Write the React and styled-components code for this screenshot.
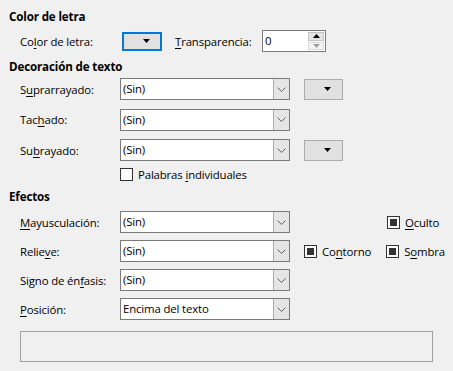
import React from 'react';
import styled, { createGlobalStyle } from 'styled-components';

const GlobalStyle = createGlobalStyle`
  html, body {
    margin: 0;
    padding: 0;
    background: #f0f0f0;
  }
  body {
    font-family: "Open Sans", "Noto Sans", sans-serif;
    font-size: 11.4px;
    letter-spacing: -0.15px;
    color: #000;
  }
`;

const Page = styled.div`
  width: 453px;
  height: 371px;
  box-sizing: border-box;
  padding: 7px 0 0 9px;
  background: #f0f0f0;
  overflow: hidden;
`;

const Heading = styled.div`
  height: 20px;
  line-height: 20px;
  font-weight: 700;
  font-size: 11.6px;
  margin-top: ${p => p.$top || 0}px;
`;

const Rows = styled.div`
  display: flex;
  flex-direction: column;
  gap: ${p => p.$gap}px;
  padding-left: 11px;
  margin-top: ${p => p.$top || 0}px;
`;

const Row = styled.div`
  display: grid;
  grid-template-columns: 100px 170px auto;
  align-items: center;
  height: 22px;
`;

const Label = styled.span`
  white-space: nowrap;
  flex-shrink: 0;
  width: ${p => (p.$width ? `${p.$width}px` : 'auto')};
  margin-left: ${p => p.$left || 0}px;
`;

const Key = styled.span`
  text-decoration: underline;
  text-underline-offset: 2px;
`;

const Combo = styled.div`
  display: flex;
  height: 22px;
  box-sizing: border-box;
  border: 1px solid #7a7a7a;
  background: #fff;
`;

const ComboText = styled.span`
  flex: 1;
  padding-left: 2px;
  line-height: 20px;
  white-space: nowrap;
`;

const ComboButton = styled.span`
  width: 15px;
  background: #e5e5e5;
  border-left: 1px solid #adadad;
  display: flex;
  align-items: center;
  justify-content: center;
`;

const ColorButton = styled.div`
  width: ${p => (p.$focused ? 40 : 39)}px;
  height: ${p => (p.$focused ? 19 : 21)}px;
  box-sizing: border-box;
  background: #e1e1e1;
  border: ${p => (p.$focused ? '2px solid #0078d7' : '1px solid #adadad')};
  display: flex;
  align-items: center;
  justify-content: flex-end;
  padding-right: ${p => (p.$focused ? 10 : 11)}px;
  flex-shrink: 0;
`;

const TopRow = styled.div`
  display: flex;
  align-items: center;
  height: 22px;
  padding-left: 11px;
  margin-top: 3px;
`;

const SpinBox = styled.div`
  display: flex;
  width: 64px;
  height: 22px;
  box-sizing: border-box;
  border: 1px solid #7a7a7a;
  background: #fff;
`;

const SpinValue = styled.span`
  flex: 1;
  padding-left: 2px;
  line-height: 20px;
`;

const SpinButtons = styled.div`
  width: 16px;
  display: flex;
  flex-direction: column;
  gap: 1px;
  padding: 1px 1px 1px 0;
`;

const SpinButton = styled.span`
  flex: 1;
  background: ${p => (p.$disabled ? '#f4f4f4' : '#e5e5e5')};
  border: 1px solid ${p => (p.$disabled ? '#dadada' : '#c4c4c4')};
  display: flex;
  align-items: center;
  justify-content: center;
`;

const Check = styled.label`
  display: flex;
  align-items: center;
  gap: 5px;
  white-space: nowrap;
`;

const Box = styled.span`
  width: 13px;
  height: 13px;
  box-sizing: border-box;
  border: 1px solid #333;
  background: #fff;
  display: flex;
  align-items: center;
  justify-content: center;
  &::after {
    content: '';
    display: ${p => (p.$mixed ? 'block' : 'none')};
    width: 7px;
    height: 7px;
    background: #333;
  }
`;

const Extras = styled.div`
  display: flex;
  align-items: center;
  gap: ${p => p.$gap || 0}px;
  padding-left: ${p => p.$pad ?? 14}px;
`;

const CheckRow = styled.div`
  height: 16px;
  display: flex;
  align-items: center;
  padding-left: 111px;
  margin-top: 5px;
`;

const Preview = styled.div`
  width: 413px;
  height: 31px;
  box-sizing: border-box;
  border: 1px solid #a0a0a0;
  margin: 11px 0 0 11px;
`;

const Chevron = () => (
  <svg width="9" height="5" viewBox="0 0 9 5">
    <path d="M0.5 0.5 L4.5 4.5 L8.5 0.5" fill="none" stroke="#606060" strokeWidth="1" />
  </svg>
);

const Tri = ({ up, color = '#000' }) => (
  <svg width="7" height="4" viewBox="0 0 7 4">
    <path d={up ? 'M0 4 L3.5 0 L7 4 Z' : 'M0 0 L7 0 L3.5 4 Z'} fill={color} />
  </svg>
);

const Select = ({ value }) => (
  <Combo>
    <ComboText>{value}</ComboText>
    <ComboButton>
      <Chevron />
    </ComboButton>
  </Combo>
);

export default function App() {
  return (
    <Page>
      <GlobalStyle />
      <Heading>Color de letra</Heading>
      <TopRow>
        <Label $width={102}>
          Co<Key>l</Key>or de letra:
        </Label>
        <ColorButton $focused>
          <Tri />
        </ColorButton>
        <Label $width={87} $left={13}>
          <Key>T</Key>ransparencia:
        </Label>
        <SpinBox>
          <SpinValue>0</SpinValue>
          <SpinButtons>
            <SpinButton>
              <Tri up />
            </SpinButton>
            <SpinButton $disabled>
              <Tri color="#a0a0a0" />
            </SpinButton>
          </SpinButtons>
        </SpinBox>
      </TopRow>

      <Heading $top={5}>Decoración de texto</Heading>
      <Rows $gap={8.5} $top={1}>
        <Row>
          <Label>
            S<Key>u</Key>prarrayado:
          </Label>
          <Select value="(Sin)" />
          <Extras>
            <ColorButton>
              <Tri />
            </ColorButton>
          </Extras>
        </Row>
        <Row>
          <Label>
            Tac<Key>h</Key>ado:
          </Label>
          <Select value="(Sin)" />
        </Row>
        <Row>
          <Label>
            Su<Key>b</Key>rayado:
          </Label>
          <Select value="(Sin)" />
          <Extras>
            <ColorButton>
              <Tri />
            </ColorButton>
          </Extras>
        </Row>
      </Rows>
      <CheckRow>
        <Check>
          <Box />
          <span>
            Palabras <Key>i</Key>ndividuales
          </span>
        </Check>
      </CheckRow>

      <Heading $top={5}>Efectos</Heading>
      <Rows $gap={7} $top={4}>
        <Row>
          <Label>
            <Key>M</Key>ayusculación:
          </Label>
          <Select value="(Sin)" />
          <Extras $pad={97}>
            <Check>
              <Box $mixed />
              <span>
                <Key>O</Key>culto
              </span>
            </Check>
          </Extras>
        </Row>
        <Row>
          <Label>
            Relie<Key>v</Key>e:
          </Label>
          <Select value="(Sin)" />
          <Extras $gap={15}>
            <Check>
              <Box $mixed />
              <span>
                Co<Key>n</Key>torno
              </span>
            </Check>
            <Check>
              <Box $mixed />
              <span>
                S<Key>o</Key>mbra
              </span>
            </Check>
          </Extras>
        </Row>
        <Row>
          <Label>
            Signo de én<Key>f</Key>asis:
          </Label>
          <Select value="(Sin)" />
        </Row>
        <Row>
          <Label>
            <Key>P</Key>osición:
          </Label>
          <Select value="Encima del texto" />
        </Row>
      </Rows>
      <Preview />
    </Page>
  );
}
